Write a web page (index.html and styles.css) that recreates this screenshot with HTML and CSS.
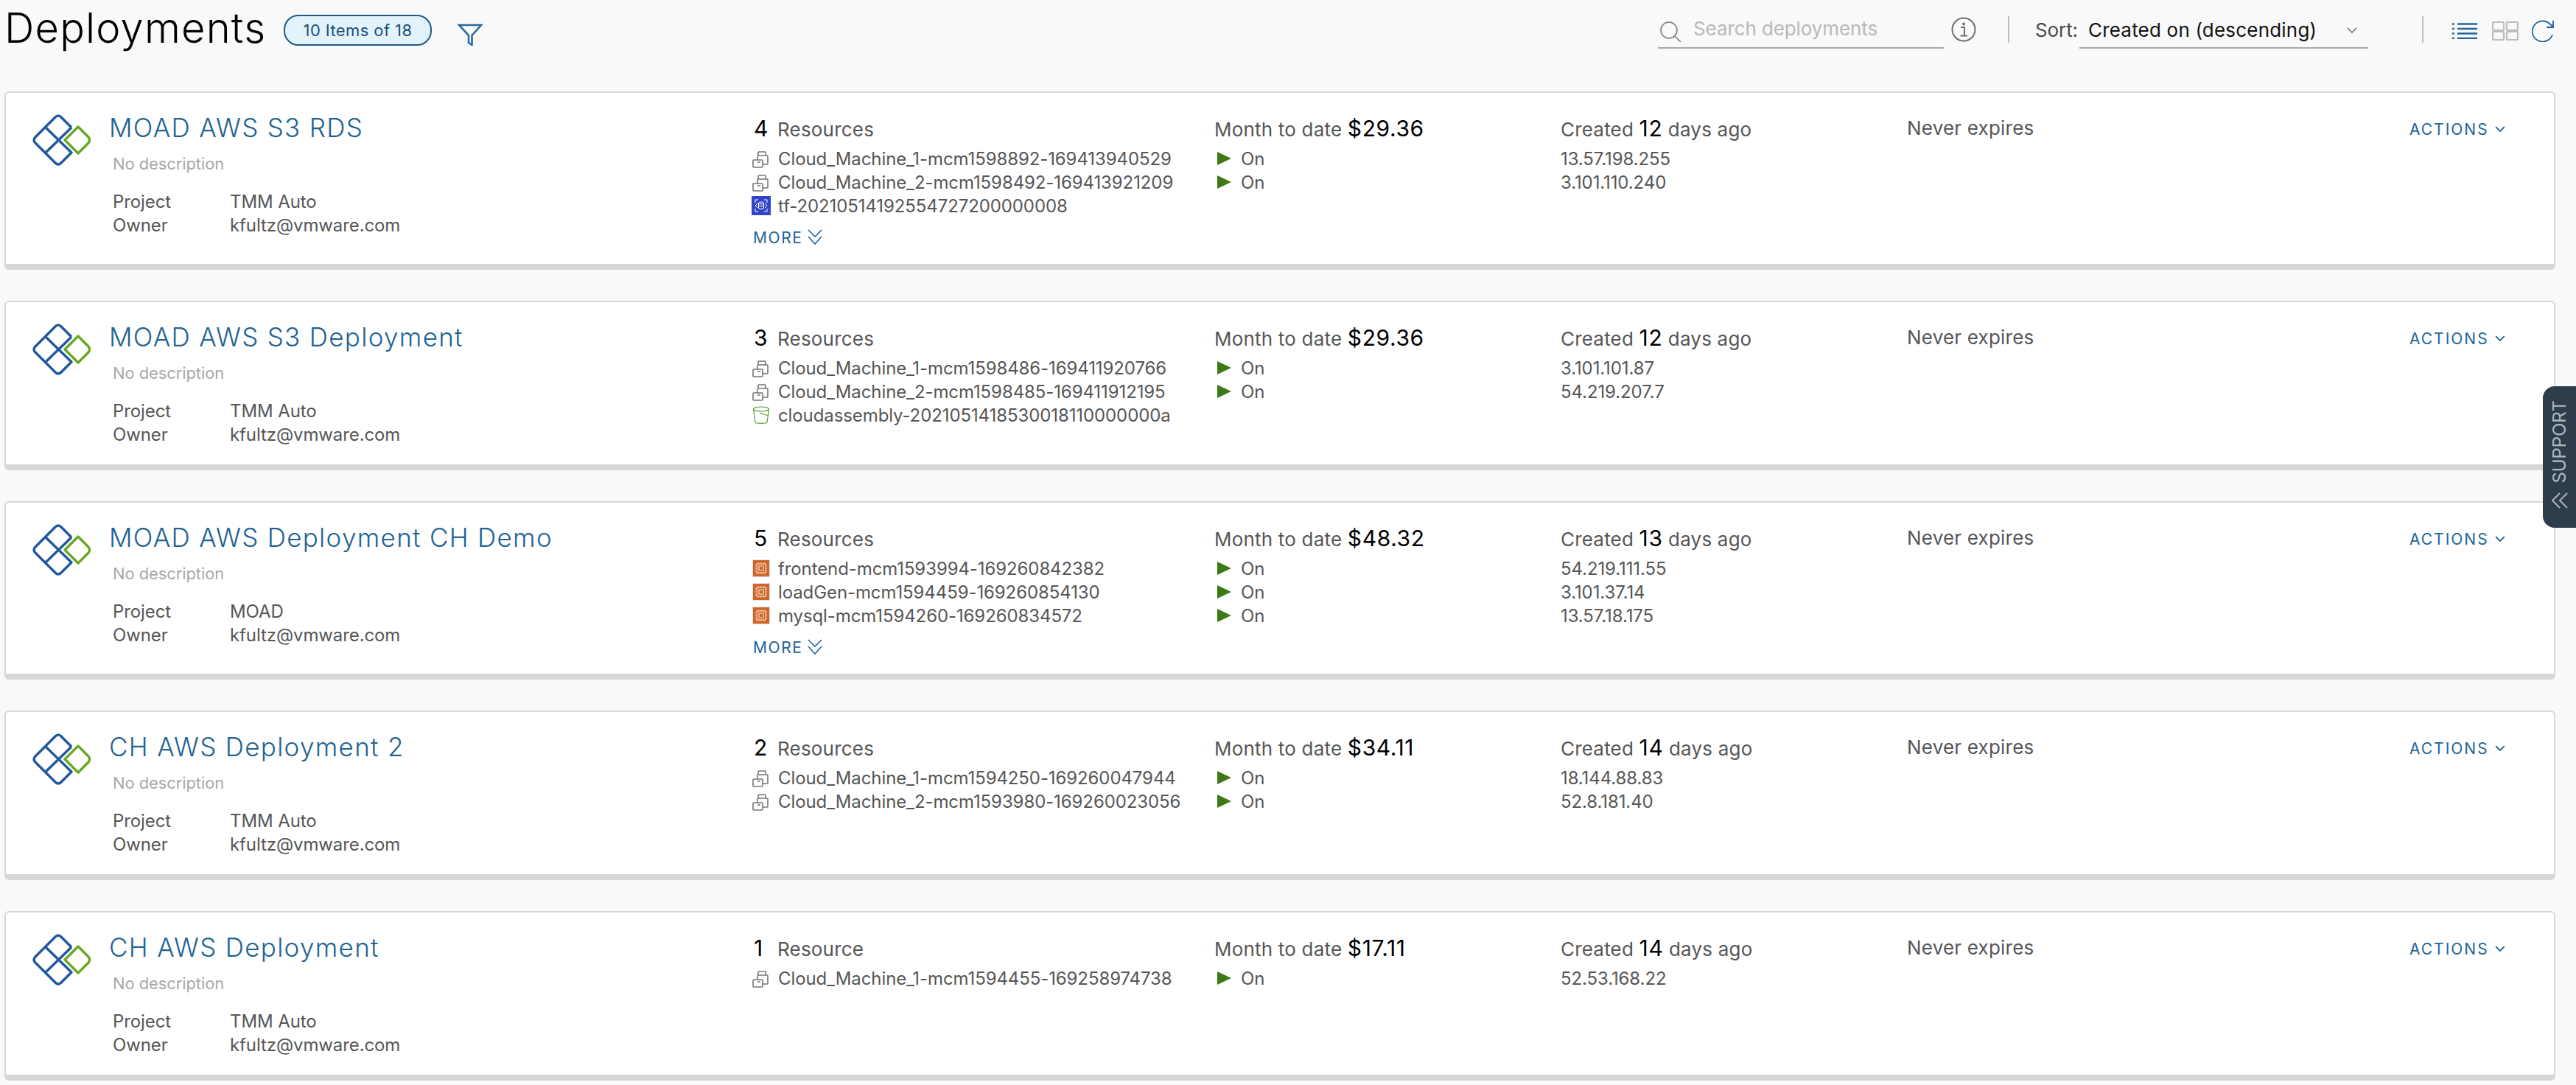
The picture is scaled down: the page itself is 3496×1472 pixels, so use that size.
FILE: index.html
```html
<!DOCTYPE html>
<html lang="en">
<head>
<meta charset="utf-8">
<title>Deployments</title>
<link rel="stylesheet" href="styles.css">
</head>
<body>
<svg class="defs" width="0" height="0" aria-hidden="true">
  <defs>
    <symbol id="logo" viewBox="0 0 80 70">
      <path d="M53 18L39 4Q35 0 31 4L4 31Q0 35 4 39L31 66Q35 70 39 66L53 52L18 18M53 18L18 52" fill="none" stroke="#22589f" stroke-width="3.4" stroke-linejoin="round"/>
      <path d="M62 17L44 35L62 53L76 39Q79 35 76 31Z" fill="none" stroke="#68a823" stroke-width="3.4" stroke-linejoin="round"/>
    </symbol>
    <symbol id="vm" viewBox="0 0 26 26">
      <path d="M3 15H14Q15 15 15 16V24Q15 25 14 25H3Q2 25 2 24V16Q2 15 3 15ZM8 15V10Q8 9 9 9H21Q22 9 22 10V20Q22 21 21 21H15M9 9V5Q9 4 10 4H18Q19 4 19 5V9M8 18H12" fill="none" stroke="#757575" stroke-width="1.600"/>
    </symbol>
    <symbol id="rds" viewBox="0 0 26 26">
      <rect width="26" height="26" fill="#3344c8"/>
      <path d="M5 9V5H9M17 5H21V9M5 17V21H9M21 17V21H17M8 10L5 13L8 16M18 10L21 13L18 16" fill="none" stroke="#fff" stroke-width="1"/>
      <ellipse cx="13" cy="9.500" rx="3.500" ry="1.500" fill="none" stroke="#fff"/>
      <path d="M9.500 9.500V16.500Q13 19 16.500 16.500V9.500M9.500 13Q13 15.500 16.500 13" fill="none" stroke="#fff"/>
    </symbol>
    <symbol id="ec2" viewBox="0 0 26 26">
      <rect x="1" y="1" width="24" height="24" fill="#e4e0dc"/>
      <rect x="2" y="2" width="22" height="22" fill="#cf6527"/>
      <rect x="7" y="7" width="12" height="12" fill="none" stroke="#f3d5bf" stroke-width="1.200"/>
      <rect x="10" y="10" width="6" height="6" fill="none" stroke="#f3d5bf" stroke-width="1.200"/>
      <path d="M5 9H7M5 13H7M5 17H7M19 9H21M19 13H21M19 17H21M9 5V7M13 5V7M17 5V7M9 19V21M13 19V21M17 19V21" stroke="#f3d5bf" stroke-width="1"/>
    </symbol>
    <symbol id="bucket" viewBox="0 0 26 26">
      <ellipse cx="13" cy="5" rx="10.500" ry="3" fill="none" stroke="#5e9e3a" stroke-width="1.200"/>
      <path d="M2.500 5L5 23Q5.500 24.300 13 24.300Q20.500 24.300 21 23L23.500 5M11 10L23 14" fill="none" stroke="#5e9e3a" stroke-width="1.200"/>
    </symbol>
    <symbol id="play" viewBox="0 0 19 18">
      <path d="M0 0L19 9L0 18Z" fill="#3d7a16"/>
    </symbol>
    <symbol id="chev" viewBox="0 0 12 8">
      <path d="M1 1.500L6 6.500L11 1.500" fill="none" stroke="currentColor" stroke-width="1.600"/>
    </symbol>
    <symbol id="dchev" viewBox="0 0 20 22">
      <path d="M1 1L10 10L19 1M1 10L10 20L19 10" fill="none" stroke="#22649a" stroke-width="1.600"/>
    </symbol>
  </defs>
</svg>

<header class="toolbar">
  <h1 class="page-title">Deployments</h1>
  <span class="count-badge">10 Items of 18</span>
  <svg class="filter-icon" viewBox="0 0 34 30"><path d="M2 2H32L19.500 16V29L15 26V16Z" fill="none" stroke="#2a6a9e" stroke-width="2.600"/></svg>
  <div class="toolbar-right">
    <label class="search">
      <svg class="search-icon" viewBox="0 0 32 28"><circle cx="14" cy="12" r="11" fill="none" stroke="#7d7d7d" stroke-width="1.600"/><path d="M22 20L30 28" stroke="#7d7d7d" stroke-width="1.600"/></svg>
      <span class="placeholder">Search deployments</span>
    </label>
    <svg class="info-icon" viewBox="0 0 34 34"><circle cx="17" cy="17" r="15.500" fill="none" stroke="#6f6f6f" stroke-width="2"/><circle cx="17" cy="9.500" r="2" fill="#6f6f6f"/><path d="M13 14H18V25M12.500 25.500H22" fill="none" stroke="#6f6f6f" stroke-width="2"/></svg>
    <span class="divider"></span>
    <span class="sort-label">Sort:</span>
    <span class="sort-select">Created on (descending)<svg class="sort-chev"><use href="#chev"/></svg></span>
    <span class="divider divider-b"></span>
    <svg class="list-icon" viewBox="0 0 34 22"><path d="M0 1.500H3M7 1.500H34M0 8H3M7 8H34M0 14.500H3M7 14.500H34M0 21H3M7 21H34" stroke="#22649a" stroke-width="2.400" fill="none"/></svg>
    <svg class="grid-icon" viewBox="0 0 36 26"><g fill="none" stroke="#bdbdbd" stroke-width="2.200"><rect x="1" y="1" width="15" height="11" rx="1"/><rect x="20" y="1" width="15" height="11" rx="1"/><rect x="1" y="14" width="15" height="11" rx="1"/><rect x="20" y="14" width="15" height="11" rx="1"/></g></svg>
    <svg class="refresh-icon" viewBox="0 0 30 30"><path d="M28 20A14 14 0 1 1 24 5L28 8.500M29 1V10H20" fill="none" stroke="#22649a" stroke-width="1.800"/></svg>
  </div>
</header>

<main class="cards">

  <article class="card">
    <svg class="logo"><use href="#logo"/></svg>
    <div class="col-name">
      <a class="dep-name">MOAD AWS S3 RDS</a>
      <p class="desc">No description</p>
      <dl class="meta"><dt>Project</dt><dd>TMM Auto</dd><dt>Owner</dt><dd>kfultz@vmware.com</dd></dl>
    </div>
    <div class="col-res">
      <div class="head"><b class="num">4</b><span class="res-word">Resources</span></div>
      <div class="row"><svg class="ic"><use href="#vm"/></svg>Cloud_Machine_1-mcm1598892-169413940529</div>
      <div class="row"><svg class="ic"><use href="#vm"/></svg>Cloud_Machine_2-mcm1598492-169413921209</div>
      <div class="row"><svg class="ic"><use href="#rds"/></svg>tf-20210514192554727200000008</div>
      <a class="more">MORE<svg class="more-ic"><use href="#dchev"/></svg></a>
    </div>
    <div class="col-cost">
      <div class="head">Month to date <b class="num">$29.36</b></div>
      <div class="row"><svg class="play"><use href="#play"/></svg>On</div>
      <div class="row"><svg class="play"><use href="#play"/></svg>On</div>
    </div>
    <div class="col-created">
      <div class="head">Created <b class="num">12</b> days ago</div>
      <div class="row">13.57.198.255</div>
      <div class="row">3.101.110.240</div>
    </div>
    <div class="col-exp"><div class="head">Never expires</div></div>
    <a class="actions">ACTIONS<svg class="act-ic"><use href="#chev"/></svg></a>
  </article>

  <article class="card">
    <svg class="logo"><use href="#logo"/></svg>
    <div class="col-name">
      <a class="dep-name">MOAD AWS S3 Deployment</a>
      <p class="desc">No description</p>
      <dl class="meta"><dt>Project</dt><dd>TMM Auto</dd><dt>Owner</dt><dd>kfultz@vmware.com</dd></dl>
    </div>
    <div class="col-res">
      <div class="head"><b class="num">3</b><span class="res-word">Resources</span></div>
      <div class="row"><svg class="ic"><use href="#vm"/></svg>Cloud_Machine_1-mcm1598486-169411920766</div>
      <div class="row"><svg class="ic"><use href="#vm"/></svg>Cloud_Machine_2-mcm1598485-169411912195</div>
      <div class="row"><svg class="ic"><use href="#bucket"/></svg>cloudassembly-2021051418530018110000000a</div>
    </div>
    <div class="col-cost">
      <div class="head">Month to date <b class="num">$29.36</b></div>
      <div class="row"><svg class="play"><use href="#play"/></svg>On</div>
      <div class="row"><svg class="play"><use href="#play"/></svg>On</div>
    </div>
    <div class="col-created">
      <div class="head">Created <b class="num">12</b> days ago</div>
      <div class="row">3.101.101.87</div>
      <div class="row">54.219.207.7</div>
    </div>
    <div class="col-exp"><div class="head">Never expires</div></div>
    <a class="actions">ACTIONS<svg class="act-ic"><use href="#chev"/></svg></a>
  </article>

  <article class="card">
    <svg class="logo"><use href="#logo"/></svg>
    <div class="col-name">
      <a class="dep-name">MOAD AWS Deployment CH Demo</a>
      <p class="desc">No description</p>
      <dl class="meta"><dt>Project</dt><dd>MOAD</dd><dt>Owner</dt><dd>kfultz@vmware.com</dd></dl>
    </div>
    <div class="col-res">
      <div class="head"><b class="num">5</b><span class="res-word">Resources</span></div>
      <div class="row"><svg class="ic"><use href="#ec2"/></svg>frontend-mcm1593994-169260842382</div>
      <div class="row"><svg class="ic"><use href="#ec2"/></svg>loadGen-mcm1594459-169260854130</div>
      <div class="row"><svg class="ic"><use href="#ec2"/></svg>mysql-mcm1594260-169260834572</div>
      <a class="more">MORE<svg class="more-ic"><use href="#dchev"/></svg></a>
    </div>
    <div class="col-cost">
      <div class="head">Month to date <b class="num">$48.32</b></div>
      <div class="row"><svg class="play"><use href="#play"/></svg>On</div>
      <div class="row"><svg class="play"><use href="#play"/></svg>On</div>
      <div class="row"><svg class="play"><use href="#play"/></svg>On</div>
    </div>
    <div class="col-created">
      <div class="head">Created <b class="num">13</b> days ago</div>
      <div class="row">54.219.111.55</div>
      <div class="row">3.101.37.14</div>
      <div class="row">13.57.18.175</div>
    </div>
    <div class="col-exp"><div class="head">Never expires</div></div>
    <a class="actions">ACTIONS<svg class="act-ic"><use href="#chev"/></svg></a>
  </article>

  <article class="card">
    <svg class="logo"><use href="#logo"/></svg>
    <div class="col-name">
      <a class="dep-name">CH AWS Deployment 2</a>
      <p class="desc">No description</p>
      <dl class="meta"><dt>Project</dt><dd>TMM Auto</dd><dt>Owner</dt><dd>kfultz@vmware.com</dd></dl>
    </div>
    <div class="col-res">
      <div class="head"><b class="num">2</b><span class="res-word">Resources</span></div>
      <div class="row"><svg class="ic"><use href="#vm"/></svg>Cloud_Machine_1-mcm1594250-169260047944</div>
      <div class="row"><svg class="ic"><use href="#vm"/></svg>Cloud_Machine_2-mcm1593980-169260023056</div>
    </div>
    <div class="col-cost">
      <div class="head">Month to date <b class="num">$34.11</b></div>
      <div class="row"><svg class="play"><use href="#play"/></svg>On</div>
      <div class="row"><svg class="play"><use href="#play"/></svg>On</div>
    </div>
    <div class="col-created">
      <div class="head">Created <b class="num">14</b> days ago</div>
      <div class="row">18.144.88.83</div>
      <div class="row">52.8.181.40</div>
    </div>
    <div class="col-exp"><div class="head">Never expires</div></div>
    <a class="actions">ACTIONS<svg class="act-ic"><use href="#chev"/></svg></a>
  </article>

  <article class="card">
    <svg class="logo"><use href="#logo"/></svg>
    <div class="col-name">
      <a class="dep-name">CH AWS Deployment</a>
      <p class="desc">No description</p>
      <dl class="meta"><dt>Project</dt><dd>TMM Auto</dd><dt>Owner</dt><dd>kfultz@vmware.com</dd></dl>
    </div>
    <div class="col-res">
      <div class="head"><b class="num">1</b><span class="res-word">Resource</span></div>
      <div class="row"><svg class="ic"><use href="#vm"/></svg>Cloud_Machine_1-mcm1594455-169258974738</div>
    </div>
    <div class="col-cost">
      <div class="head">Month to date <b class="num">$17.11</b></div>
      <div class="row"><svg class="play"><use href="#play"/></svg>On</div>
    </div>
    <div class="col-created">
      <div class="head">Created <b class="num">14</b> days ago</div>
      <div class="row">52.53.168.22</div>
    </div>
    <div class="col-exp"><div class="head">Never expires</div></div>
    <a class="actions">ACTIONS<svg class="act-ic"><use href="#chev"/></svg></a>
  </article>
</main>

<aside class="support">
  <span class="support-text">SUPPORT</span>
  <svg class="support-ic" viewBox="0 0 22 22"><path d="M1 1L11 11L21 1M1 11L11 21L21 11" fill="none" stroke="#aeb9c2" stroke-width="1.800"/></svg>
</aside>
</body>
</html>
```
FILE: styles.css
```css
* { box-sizing: border-box; }
html, body { height: 100%; }
body {
  margin: 0;
  background: #f9f9f9;
  color: #565656;
  font-family: Inter, "Noto Sans", "Liberation Sans", sans-serif;
  font-size: 24px;
  letter-spacing: -0.1px;
  overflow: hidden;
}
.defs { position: absolute; }
p, dl, dd, h1 { margin: 0; }

.toolbar {
  height: 124px;
  display: flex;
  align-items: flex-start;
  padding: 0 30px 0 6px;
}
.page-title {
  font-size: 56px;
  line-height: 76px;
  font-weight: 300;
  color: #000;
  letter-spacing: 1.200px;
  width: 379px;
  flex: none;
}
.count-badge {
  flex: none;
  width: 201px;
  height: 42px;
  margin-top: 20px;
  border: 2px solid #1d5a86;
  border-radius: 20px;
  background: #e3f3fc;
  color: #1d4f73;
  font-size: 22px;
  letter-spacing: 0.400px;
  line-height: 38px;
  text-align: center;
}
.filter-icon { width: 34px; height: 30px; margin: 32px 0 0 35px; flex: none; }
.toolbar-right {
  margin-left: auto;
  display: flex;
  align-items: flex-start;
}
.search {
  width: 388px;
  height: 66px;
  border-bottom: 2px solid #a8a8a8;
  display: flex;
  padding-left: 1px;
}
.search-icon { width: 32px; height: 28px; margin-top: 29px; flex: none; }
.placeholder {
  margin-left: 15px;
  height: 64px;
  color: #b8b8b8;
  font-size: 26px;
  line-height: 78px;
  white-space: nowrap;
}
.info-icon { width: 34px; height: 34px; margin: 23px 0 0 10px; flex: none; }
.divider { width: 2px; height: 36px; background: #bdbdbd; margin: 22px 0 0 43px; flex: none; }
.divider-b { margin-left: 73px; }
.sort-label { margin-left: 35px; line-height: 82px; width: 60px; color: #4a4a4a; font-size: 26px; flex: none; }
.sort-select {
  width: 392px;
  height: 66px;
  border-bottom: 2px solid #a8a8a8;
  padding-left: 12px;
  line-height: 82px;
  color: #111;
  font-size: 26px;
  letter-spacing: 0.2px;
  position: relative;
  white-space: nowrap;
}
.sort-chev { position: absolute; left: 362px; top: 36px; width: 16px; height: 10px; color: #8a8a8a; }
.list-icon { width: 34px; height: 22px; margin: 31px 0 0 39px; flex: none; }
.grid-icon { width: 36px; height: 26px; margin: 29px 0 0 20px; flex: none; }
.refresh-icon { width: 30px; height: 30px; margin: 27px 0 0 18px; flex: none; }

.cards {
  display: flex;
  flex-direction: column;
  gap: 42px;
  width: 3462px;
  margin-left: 6px;
}
.card {
  display: flex;
  align-items: flex-start;
  background: #fff;
  border: 2px solid #d7d7d7;
  border-bottom-width: 8px;
  border-radius: 6px;
  padding: 25px 0 24px 36px;
}
.logo { width: 80px; height: 70px; margin: 4px 24px 0 0; flex: none; }
.col-name { width: 873px; flex: none; }
.dep-name {
  display: block;
  font-size: 35px;
  font-weight: 300;
  letter-spacing: 1.300px;
  line-height: 44px;
  color: #1f6394;
  white-space: nowrap;
}
.desc { margin: 11px 0 0 5px; line-height: 32px; font-size: 22px; color: #a8a8a8; }
.meta {
  margin: 20px 0 0 5px;
  display: grid;
  grid-template-columns: 159px 1fr;
  line-height: 32px;
}
.col-res { width: 627px; flex: none; }
.col-cost, .col-created { width: 470px; flex: none; }
.col-exp { width: 682px; flex: none; }
.head { margin-top: 7px; line-height: 32px; white-space: nowrap; height: 32px; font-size: 26px; letter-spacing: 0.2px; }
.num { font-weight: 400; color: #000; font-size: 30px; letter-spacing: 0.6px; }
.res-word { margin-left: 12px; }
.col-res .num { display: inline-block; width: 20px; margin-left: 2px; }
.head + .row { margin-top: 9px; }
.row {
  display: flex;
  align-items: center;
  height: 32px;
  white-space: nowrap;
}
.ic { width: 26px; height: 26px; margin-right: 10px; margin-left: -1px; flex: none; }
.play { width: 19px; height: 18px; margin: 0 13px 0 4px; flex: none; }
.more {
  display: flex;
  align-items: center;
  height: 24px;
  margin: 15px 0 0 1px;
  color: #22649a;
  font-size: 21px;
  letter-spacing: 1.600px;
}
.more-ic { width: 20px; height: 22px; margin-left: 6px; }
.actions {
  display: flex;
  align-items: center;
  margin-top: 8px;
  height: 32px;
  color: #22649a;
  font-size: 21px;
  letter-spacing: 2px;
  white-space: nowrap;
}
.act-ic { width: 14px; height: 10px; margin-left: 8px; }

.support {
  position: absolute;
  left: 3451px;
  top: 524px;
  width: 45px;
  height: 192px;
  background: #2f3c4b;
  border-radius: 16px 0 0 16px;
  display: flex;
  flex-direction: column;
  align-items: center;
  padding-top: 19px;
}
.support-text {
  writing-mode: vertical-rl;
  transform: rotate(180deg);
  color: #aeb9c2;
  font-size: 24px;
  line-height: 26px;
}
.support-ic { width: 22px; height: 22px; margin-top: 12px; transform: rotate(90deg); }
```
